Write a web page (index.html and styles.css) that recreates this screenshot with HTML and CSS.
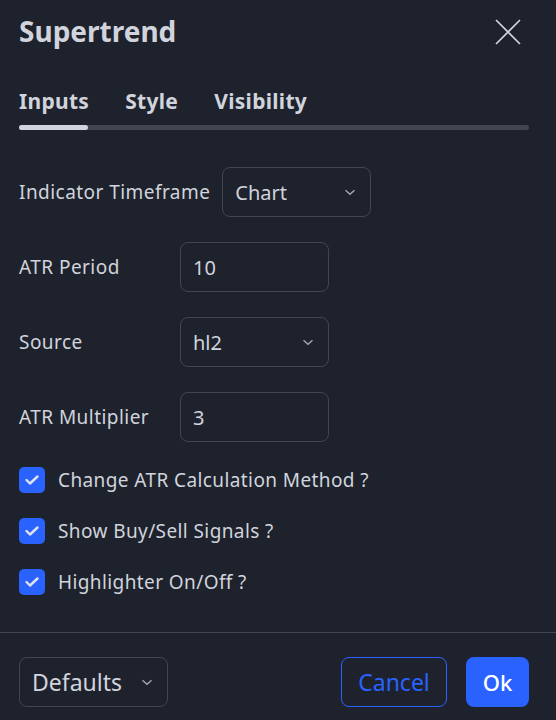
FILE: index.html
```html
<!DOCTYPE html>
<html>
<head>
<meta charset="utf-8">
<link rel="stylesheet" href="styles.css">
</head>
<body>
<div class="dialog">
  <div class="header">
    <div class="title">Supertrend</div>
    <button class="close" aria-label="Close">
      <svg width="26" height="26" viewBox="0 0 26 26"><path d="M1 1 L25 25 M25 1 L1 25" stroke="#d1d4dc" stroke-width="1.6" fill="none"/></svg>
    </button>
  </div>
  <div class="tabs">
    <div class="tab-labels">
      <span class="tab active">Inputs</span>
      <span class="tab">Style</span>
      <span class="tab">Visibility</span>
    </div>
    <div class="tab-track"><div class="tab-thumb"></div></div>
  </div>
  <div class="content">
    <div class="row">
      <div class="label">Indicator Timeframe</div>
      <div class="field select"><span>Chart</span><svg class="chev" width="12" height="7" viewBox="0 0 12 7"><path d="M1.5 1.2 L6 5.3 L10.5 1.2" stroke="#a3a6af" stroke-width="1.4" fill="none"/></svg></div>
    </div>
    <div class="row">
      <div class="label">ATR Period</div>
      <div class="field"><span>10</span></div>
    </div>
    <div class="row">
      <div class="label">Source</div>
      <div class="field select"><span>hl2</span><svg class="chev" width="12" height="7" viewBox="0 0 12 7"><path d="M1.5 1.2 L6 5.3 L10.5 1.2" stroke="#a3a6af" stroke-width="1.4" fill="none"/></svg></div>
    </div>
    <div class="row">
      <div class="label">ATR Multiplier</div>
      <div class="field"><span>3</span></div>
    </div>
    <div class="check-row">
      <span class="box"><svg width="16" height="12" viewBox="0 0 16 12"><path d="M2.5 6 L6 9.5 L13.5 2.5" stroke="#e0e3eb" stroke-width="2.4" fill="none" stroke-linecap="round" stroke-linejoin="round"/></svg></span>
      <span class="check-label">Change ATR Calculation Method ?</span>
    </div>
    <div class="check-row">
      <span class="box"><svg width="16" height="12" viewBox="0 0 16 12"><path d="M2.5 6 L6 9.5 L13.5 2.5" stroke="#e0e3eb" stroke-width="2.4" fill="none" stroke-linecap="round" stroke-linejoin="round"/></svg></span>
      <span class="check-label">Show Buy/Sell Signals ?</span>
    </div>
    <div class="check-row">
      <span class="box"><svg width="16" height="12" viewBox="0 0 16 12"><path d="M2.5 6 L6 9.5 L13.5 2.5" stroke="#e0e3eb" stroke-width="2.4" fill="none" stroke-linecap="round" stroke-linejoin="round"/></svg></span>
      <span class="check-label">Highlighter On/Off ?</span>
    </div>
  </div>
  <div class="footer">
    <div class="field select defaults"><span>Defaults</span><svg class="chev" width="12" height="7" viewBox="0 0 12 7"><path d="M1.5 1.2 L6 5.3 L10.5 1.2" stroke="#a3a6af" stroke-width="1.4" fill="none"/></svg></div>
    <div class="actions">
      <button class="btn cancel">Cancel</button>
      <button class="btn ok">Ok</button>
    </div>
  </div>
</div>
</body>
</html>
```

FILE: styles.css
```css
* { box-sizing: border-box; }
html, body { margin: 0; padding: 0; background: #1e222d; }
body {
  font-family: "Noto Sans", "Open Sans", sans-serif;
  color: #d1d4dc;
}
.dialog {
  width: 556px;
  height: 720px;
  display: flex;
  flex-direction: column;
}
.header {
  height: 64px;
  display: flex;
  align-items: center;
  justify-content: space-between;
  padding: 0 35px 0 19px;
}
.title {
  font-size: 28px;
  font-weight: 700;
  margin-top: -2px;
}
.close {
  background: none;
  border: 0;
  padding: 0;
  width: 26px;
  height: 26px;
  display: flex;
}
.tabs {
  padding: 22px 27px 0 19px;
}
.tab-labels {
  display: flex;
  gap: 36px;
  height: 30px;
  align-items: center;
}
.tab {
  font-size: 21px;
  font-weight: 700;
  letter-spacing: 0.3px;
}
.tab-track {
  margin-top: 9px;
  height: 5px;
  border-radius: 3px;
  background: #434651;
}
.tab-thumb {
  width: 69px;
  height: 5px;
  border-radius: 3px;
  background: #d1d4dc;
}
.content {
  flex: 1;
  padding: 37px 27px 0 19px;
  display: flex;
  flex-direction: column;
  gap: 25px;
}
.row {
  display: flex;
  align-items: center;
  gap: 12px;
  height: 50px;
}
.label {
  min-width: 149px;
  font-size: 19px;
  letter-spacing: 0.45px;
}
.field {
  width: 149px;
  height: 50px;
  border: 1px solid #434651;
  border-radius: 8px;
  display: flex;
  align-items: center;
  justify-content: space-between;
  padding: 0 14px 0 12px;
  font-size: 20px;
}
.chev { flex-shrink: 0; }
.check-row {
  display: flex;
  align-items: center;
  gap: 13px;
  height: 26px;
}
.box {
  width: 26px;
  height: 26px;
  border-radius: 5px;
  background: #2962ff;
  display: flex;
  align-items: center;
  justify-content: center;
}
.check-label {
  font-size: 19px;
  letter-spacing: 0.4px;
}
.defaults { font-size: 23px; }
.footer {
  height: 88px;
  border-top: 1px solid #434651;
  padding: 24px 27px 13px 19px;
  display: flex;
  justify-content: space-between;
  align-items: flex-start;
}
.actions {
  display: flex;
  gap: 19px;
}
.btn {
  height: 50px;
  border-radius: 8px;
  font-family: "Noto Sans", "Open Sans", sans-serif;
  font-size: 23px;
  padding: 0;
}
.cancel {
  width: 106px;
  background: transparent;
  border: 1px solid #2962ff;
  color: #2962ff;
}
.ok {
  width: 63px;
  background: #2962ff;
  border: 0;
  color: #ffffff;
  font-weight: 500;
  font-size: 22px;
}
```
